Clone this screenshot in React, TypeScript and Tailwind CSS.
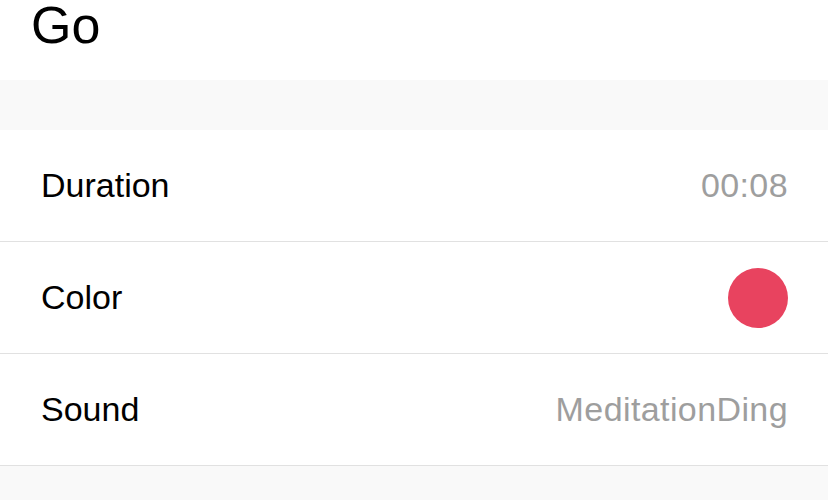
import React from "react";

const rows = [
  { label: "Duration", value: "00:08" },
  { label: "Color", color: "#e8435f" },
  { label: "Sound", value: "MeditationDing" },
];

const App: React.FC = () => {
  return (
    <main
      className="w-[828px] h-[500px] bg-[#f9f9f9] overflow-hidden"
      style={{ fontFamily: '"Liberation Sans", Arial, sans-serif' }}
    >
      <header className="h-[80px] bg-white pl-[31px] pt-[5px]">
        <h1 className="text-[52px] leading-[40px] text-black">Go</h1>
      </header>

      <div className="h-[50px]" />

      <section className="bg-white">
        {rows.map((row) => (
          <div
            key={row.label}
            className="h-[112px] flex items-center justify-between pl-[41px] pr-[40px] border-b border-[#e1e1e1]"
          >
            <span className="text-[34px] text-black">{row.label}</span>
            {row.color ? (
              <span className="w-[60px] h-[60px] rounded-full bg-[#e8435f]" />
            ) : (
              <span className="text-[34px] tracking-[0.4px] text-[#9e9e9e]">
                {row.value}
              </span>
            )}
          </div>
        ))}
      </section>
    </main>
  );
};

export default App;
